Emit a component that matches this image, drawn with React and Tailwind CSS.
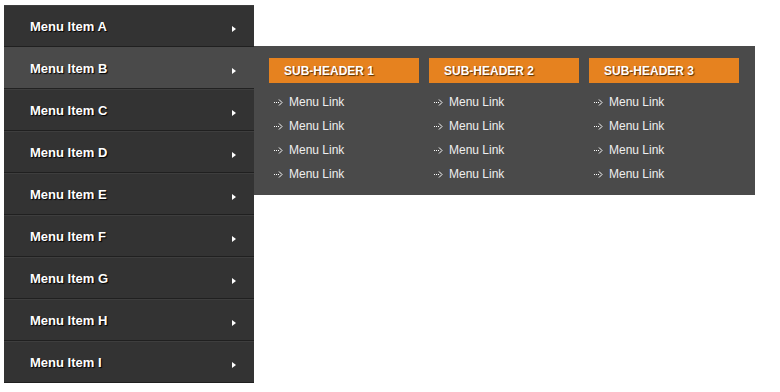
import React from "react";

const items = ["A", "B", "C", "D", "E", "F", "G", "H", "I"];
const headers = ["SUB-HEADER 1", "SUB-HEADER 2", "SUB-HEADER 3"];

function LinkArrow() {
  return (
    <svg width="9" height="7" viewBox="0 0 9 7" className="shrink-0">
      <rect x="0" y="3" width="1" height="1" fill="#ffffff" />
      <rect x="2" y="3" width="1" height="1" fill="#ffffff" />
      <rect x="4" y="3" width="1" height="1" fill="#ffffff" />
      <path d="M5 0.5 L8 3.5 L5 6.5" fill="none" stroke="#ffffff" strokeWidth="1" />
    </svg>
  );
}

export default function App() {
  return (
    <div className="w-[780px] h-[392px] bg-white pt-[5px] pl-[4px] font-['Liberation_Sans',Arial,sans-serif]">
      <div className="relative w-[250px]">
        <div className="flex flex-col bg-[#333333]">
          {items.map((l) => {
            const active = l === "B";
            return (
              <div
                key={l}
                className={`h-[42px] flex items-center justify-between pl-[26px] pr-[18px] border-t border-b ${
                  active ? "bg-[#4a4a4a] border-t-[#4a4a4a] border-b-[#222222]" : "bg-[#333333] border-t-[#3e3e3e] border-b-[#202020]"
                }`}
              >
                <span className="mt-[2px] text-[13px] font-bold text-white [text-shadow:1px_1px_1px_#000]">Menu Item {l}</span>
                <span className="mt-[5px] w-0 h-0 border-y-[3.5px] border-y-transparent border-l-[4px] border-l-white"></span>
              </div>
            );
          })}
        </div>
        <div className="absolute left-[250px] top-[41px] w-[501px] h-[149px] bg-[#4a4a4a] pt-[12px] pl-[15px] flex gap-[10px]">
          {headers.map((h) => (
            <div key={h} className="w-[150px] flex flex-col">
              <div className="h-[25px] bg-[#e6821f] pl-[15px] flex items-center text-[12px] font-bold text-white [text-shadow:1px_1px_1px_#5a3000]">
                {h}
              </div>
              <div className="mt-[7px] flex flex-col">
                {[0, 1, 2, 3].map((i) => (
                  <div key={i} className="h-[24px] flex items-center pl-[5px] gap-[6px] text-[12px] text-[#eeeeee]">
                    <LinkArrow />
                    <span>Menu Link</span>
                  </div>
                ))}
              </div>
            </div>
          ))}
        </div>
      </div>
    </div>
  );
}
